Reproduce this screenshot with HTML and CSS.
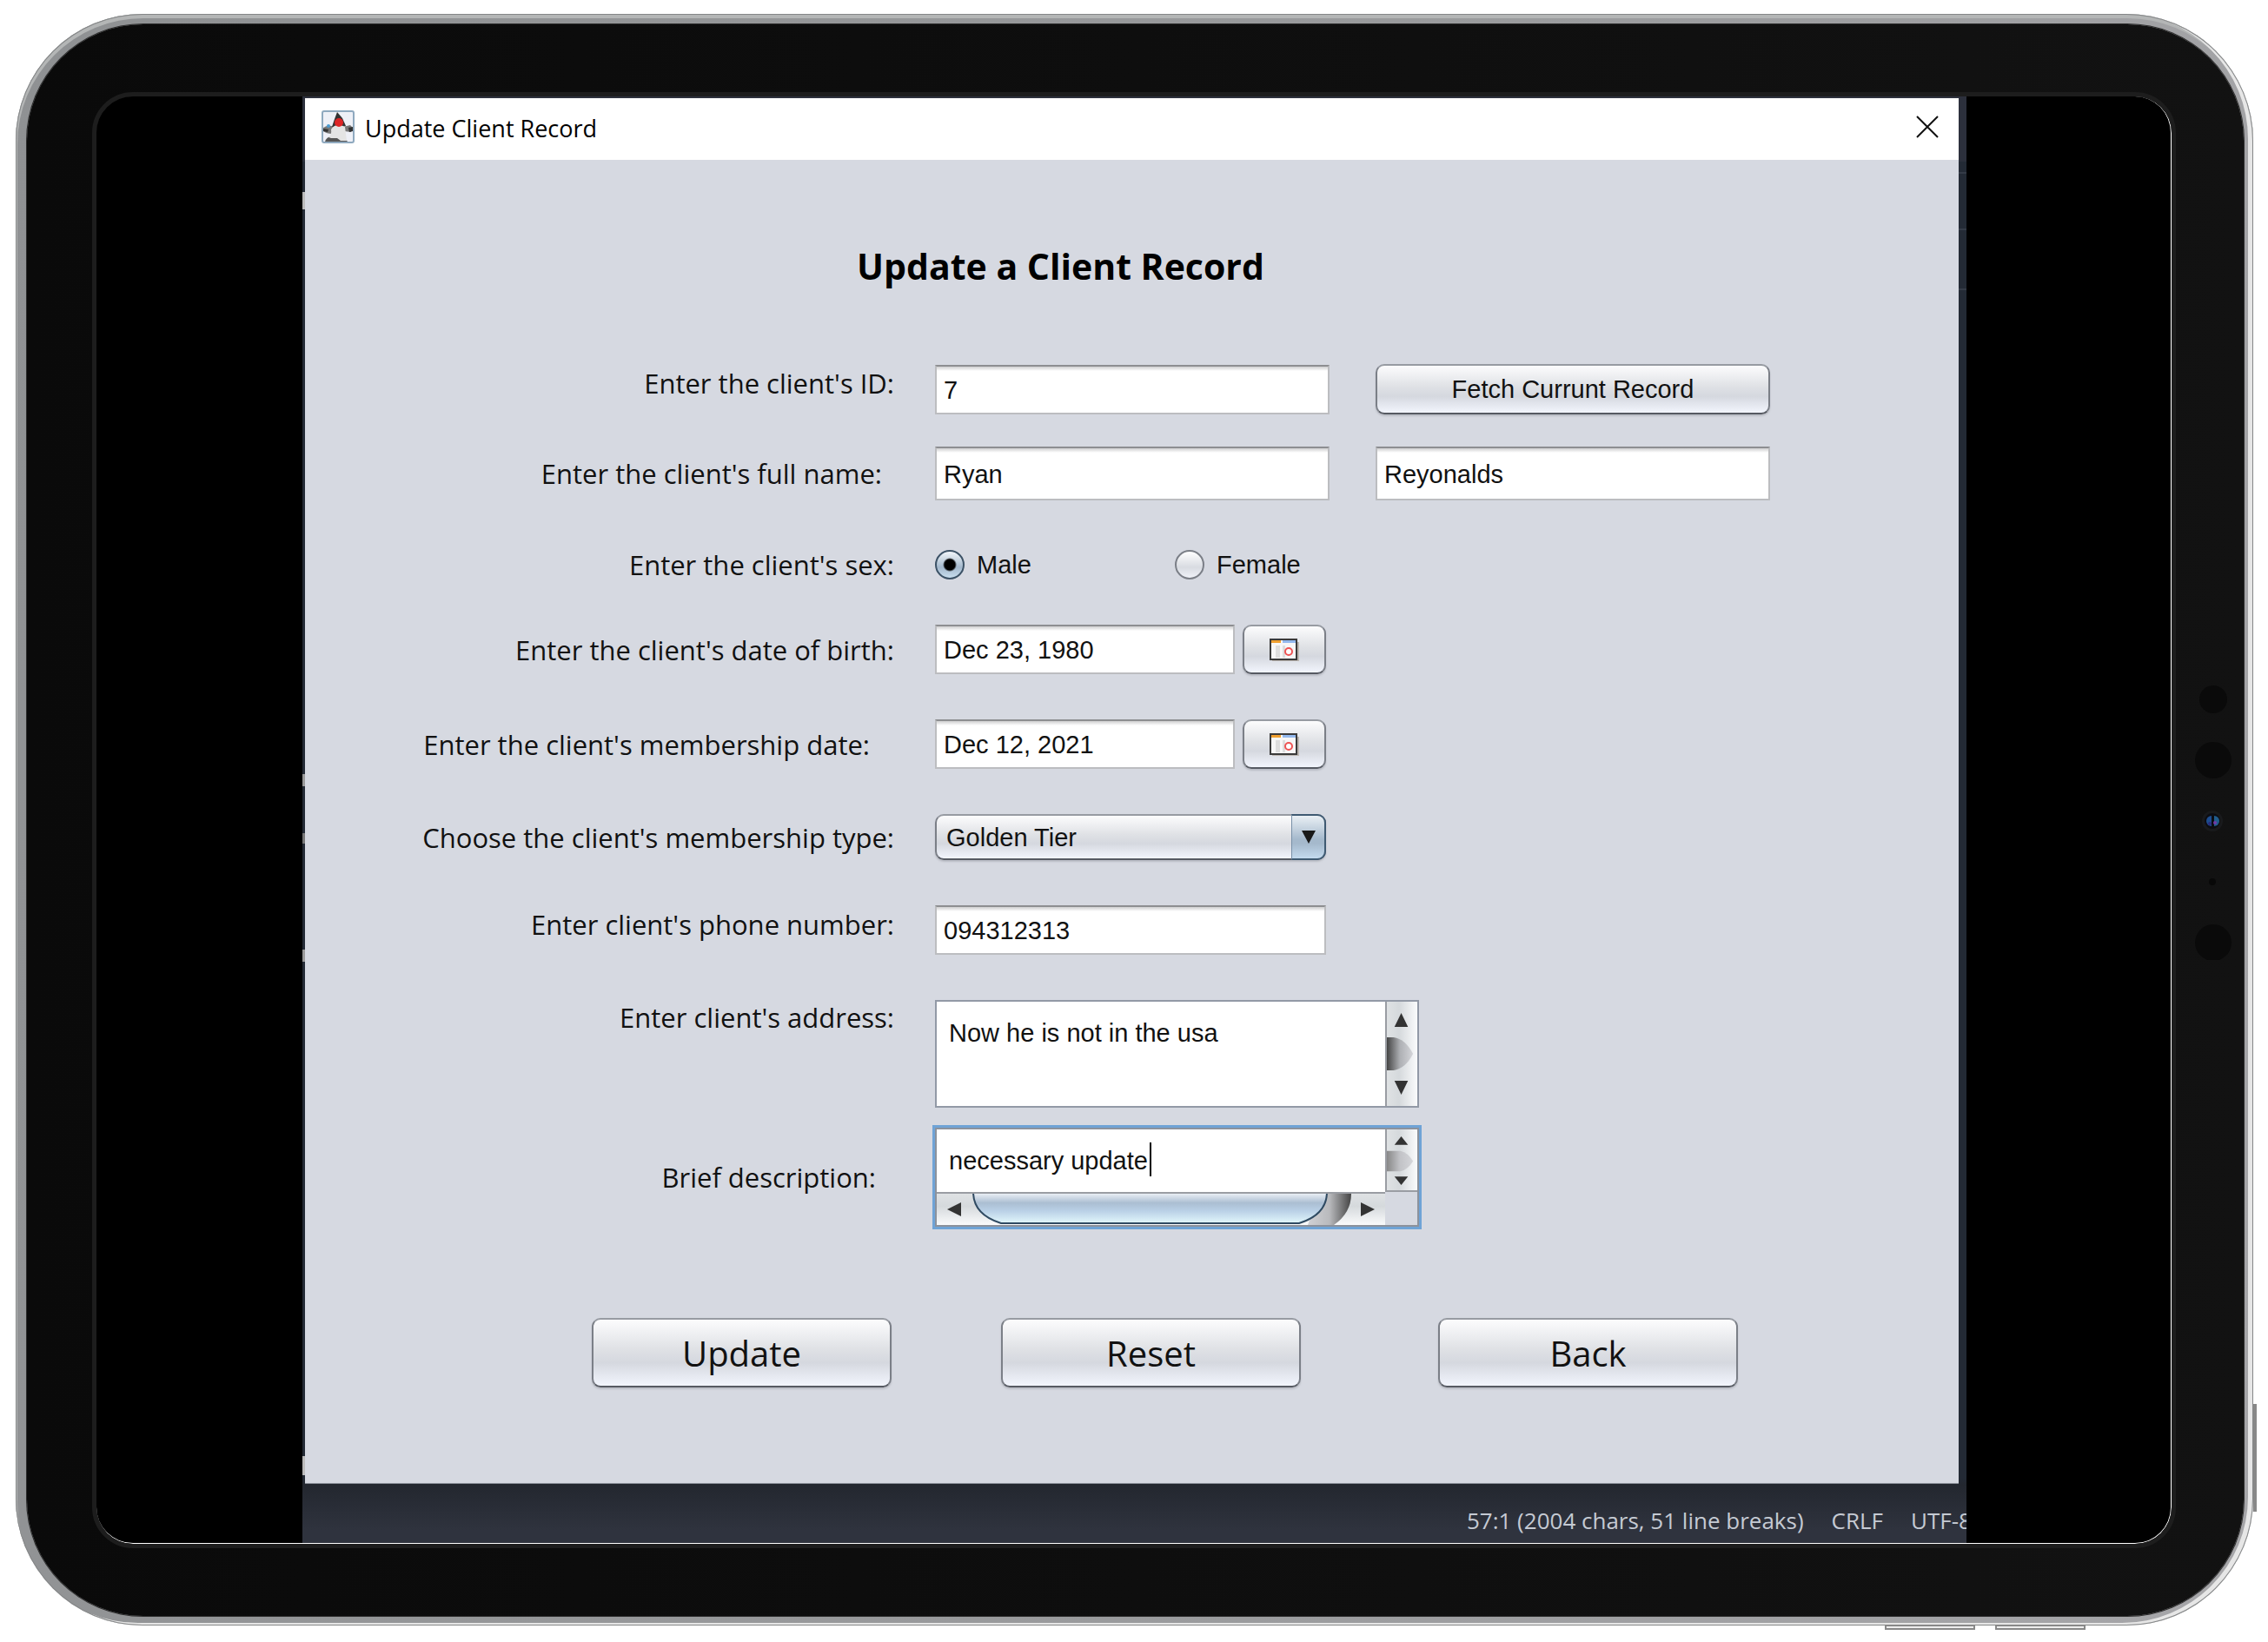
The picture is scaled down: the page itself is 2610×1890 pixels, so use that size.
FILE: index.html
```html
<!DOCTYPE html>
<html lang="en">
<head>
<meta charset="utf-8">
<title>Update Client Record</title>
<link rel="stylesheet" href="styles.css">
</head>
<body>
<div class="device">
  <span class="key key-side"></span>
  <span class="key key-low key-low-a"></span>
  <span class="key key-low key-low-b"></span>
  <div class="bezel">
    <svg class="sensors" width="44" height="320" viewBox="0 0 44 320" aria-hidden="true">
      <circle cx="22" cy="20" r="16" fill="#0a0a0a"/>
      <circle cx="22" cy="90" r="21" fill="#0a0a0a"/>
      <circle cx="21" cy="160" r="12" fill="#191a1c"/>
      <circle cx="21" cy="160" r="9" fill="#0c0d12"/>
      <path d="M20 154a6 6 0 0 0 0 12z" fill="#1d4c8e"/>
      <path d="M23 154a6 6 0 0 1 0 12z" fill="#205c8c"/>
      <circle cx="18" cy="163" r="2" fill="#282a7c"/>
      <circle cx="24" cy="162" r="2" fill="#713aa8"/>
      <circle cx="21" cy="230" r="4" fill="#080808"/>
      <circle cx="22" cy="300" r="21" fill="#0a0a0a"/>
    </svg>
    <div class="screen">
      <div class="desktop">
        <main class="window">
          <header class="titlebar">
            <svg class="duke" viewBox="0 0 38 38" aria-hidden="true">
              <rect x="1" y="1" width="36" height="36" rx="2" fill="#eef0f7" stroke="#8fa9bf" stroke-width="2"/>
              <path d="M2 20q6-4 12-1l-2 8q-6 0-10-3zM25 19l8-2 3 3-2 5-8-1z" fill="#777"/>
              <path d="M2 21l6 1-1 3-5-1z" fill="#333"/>
              <path d="M31 20l5-1v5l-4 1z" fill="#333"/>
              <path d="M4 36q1-5 9-7l13 2 4 5z" fill="#555"/>
              <path d="M18 2l6 7 4 9-8 2-8-1 3-9z" fill="#333"/>
              <path d="M11 22q3-5 8-5 5 0 8 2l2 16-7 0-4-3-7 0-3-1q4-3 3-9z" fill="#e4e4e4"/>
              <circle cx="20" cy="14" r="5" fill="#dd2526"/>
              <circle cx="8" cy="18" r="2" fill="#4a9ad0"/>
            </svg>
            <span class="titlebar-text">Update Client Record</span>
            <button class="close" type="button" aria-label="Close">
              <svg width="26" height="26" viewBox="0 0 26 26"><path d="M1 1l24 24M25 1L1 25" stroke="#111" stroke-width="2" fill="none"/></svg>
            </button>
          </header>
          <form class="form">
            <h1 class="heading">Update a Client Record</h1>

            <div class="row">
              <label class="label raised" for="id">Enter the client's ID:</label>
              <input class="text wide" id="id" type="text" value="7">
              <button class="button fetch" type="button">Fetch Currunt Record</button>
            </div>
            <div class="row row-near">
              <label class="label inset-1" for="first">Enter the client's full name:</label>
              <input class="text wide tall" id="first" type="text" value="Ryan">
              <input class="text wide tall" type="text" value="Reyonalds" aria-label="Last name">
            </div>
            <div class="row row-sex" role="radiogroup" aria-labelledby="sex">
              <span class="label" id="sex">Enter the client's sex:</span>
              <label class="choice"><input class="radio" type="radio" name="sex" checked>Male</label>
              <label class="choice"><input class="radio" type="radio" name="sex">Female</label>
            </div>
            <div class="row">
              <label class="label" for="dob">Enter the client's date of birth:</label>
              <div class="date">
                <input class="text" id="dob" type="text" value="Dec 23, 1980">
                <button class="button pick" type="button" aria-label="Pick date of birth">
                  <svg width="34" height="26" viewBox="0 0 34 26"><use href="#cal"/></svg>
                </button>
              </div>
            </div>
            <div class="row">
              <label class="label inset-3" for="joined">Enter the client's membership date:</label>
              <div class="date">
                <input class="text" id="joined" type="text" value="Dec 12, 2021">
                <button class="button pick" type="button" aria-label="Pick membership date">
                  <svg width="34" height="26" viewBox="0 0 34 26">
                    <g id="cal">
                      <path d="M3 25h30V4" fill="none" stroke="#bbb5b0" stroke-width="2"/>
                      <rect x="1" y="1" width="30" height="23" fill="#f7f7f7" stroke="#3a3a3a" stroke-width="2"/>
                      <path d="M2 2h11v3H2z" fill="#f0a030"/>
                      <path d="M15 2h15v3H15z" fill="#94b9ee"/>
                      <path d="M7 8h5v14H7zM15 8h3v14h-3z" fill="#dedede"/>
                      <circle cx="22" cy="15" r="4" fill="#fff" stroke="#ee5353" stroke-width="2"/>
                    </g>
                  </svg>
                </button>
              </div>
            </div>
            <div class="row">
              <label class="label" for="tier">Choose the client's membership type:</label>
              <div class="combo">
                <select class="select" id="tier"><option>Golden Tier</option><option>Silver Tier</option></select>
                <span class="combo-arrow"><svg width="16" height="15" viewBox="0 0 16 15"><path d="M0 0h16L8 15z" fill="#191919"/></svg></span>
              </div>
            </div>
            <div class="row">
              <label class="label raised" for="phone">Enter client's phone number:</label>
              <input class="text mid" id="phone" type="text" value="094312313">
            </div>
            <div class="row">
              <label class="label at-top" for="address">Enter client's address:</label>
              <div class="pane pane-address">
                <textarea class="area" id="address">Now he is not in the usa</textarea>
                <svg class="vbar" viewBox="0 0 36 120" preserveAspectRatio="none" aria-hidden="true">
                  <path d="M17 13l8 16H9zM17 107l8-16H9z" fill="#333"/>
                  <path d="M0 41h8q14 2 23 19-9 17-23 19H0z" fill="url(#knob)"/>
                </svg>
              </div>
            </div>
            <div class="row row-focus">
              <label class="label inset-2" for="brief">Brief description:</label>
              <div class="pane pane-brief">
                <div class="area-box">
                  <textarea class="area" id="brief">necessary update</textarea>
                  <span class="caret"></span>
                </div>
                <svg class="vbar vbar-short" viewBox="0 0 36 71" preserveAspectRatio="none" aria-hidden="true">
                  <path d="M17 8l8 10H9zM17 65l8-10H9z" fill="#333"/>
                  <path d="M0 25h16q9 2 15 12-6 10-15 12H0z" fill="url(#knob2)"/>
                </svg>
                <svg class="hbar" viewBox="0 0 516 36" preserveAspectRatio="none" aria-hidden="true">
                  <defs>
                    <linearGradient id="knob"><stop offset="0" stop-color="#444"/><stop offset=".5" stop-color="#aeb0b4"/><stop offset="1" stop-color="#d5d6da"/></linearGradient>
                    <linearGradient id="knob2"><stop offset="0" stop-color="#888"/><stop offset=".5" stop-color="#c2c3c7"/><stop offset="1" stop-color="#d5d6da"/></linearGradient>
                    <linearGradient id="thumb" x2="0" y2="1"><stop offset="0" stop-color="#f4f7fa"/><stop offset=".35" stop-color="#abbed2"/><stop offset=".6" stop-color="#b9d0e6"/><stop offset="1" stop-color="#e2f7fc"/></linearGradient>
                    <linearGradient id="tail"><stop offset="0" stop-color="#d0d1d5"/><stop offset=".5" stop-color="#b9babd"/><stop offset="1" stop-color="#444"/></linearGradient>
                  </defs>
                  <path d="M12 18l16-8v16zM504 18l-16-8v16z" fill="#333"/>
                  <path d="M440 0h37q0 22-20 36h-30z" fill="url(#tail)"/>
                  <path d="M42-2q0 26 32 36h343q32-10 32-36z" fill="url(#thumb)" stroke="#2f4a62" stroke-width="2"/>
                </svg>
              </div>
            </div>

            <div class="actions">
              <button class="button action action-1" type="button">Update</button>
              <button class="button action action-2" type="button">Reset</button>
              <button class="button action action-3" type="button">Back</button>
            </div>
          </form>
        </main>
        <footer class="status">
          <span>57:1 (2004 chars, 51 line breaks)</span>
          <span>CRLF</span>
          <span class="clip">UTF-8</span>
        </footer>
      </div>
    </div>
  </div>
</div>
</body>
</html>
```
FILE: styles.css
```css
* { box-sizing: border-box; }

body {
  margin: 0;
  padding: 16px 17px 16px 18px;
  background: #fff;
  color: #111;
  font-family: "Open Sans", "Noto Sans", sans-serif;
}

/* Tablet frame */
.device {
  position: relative;
  padding: 12px 11px 11px 13px;
  border-radius: 146px;
  background: linear-gradient(100deg, #8f9193, #9b9c9e 60%, #a6a6a9);
  box-shadow: inset 0 0 0 1px #858788, inset -5px -2px 0 1px #e6e6e6, inset 1px 4px 0 1px #b4b6b6;
}
.bezel {
  position: relative;
  padding: 78px;
  border-radius: 134px;
  background: linear-gradient(90deg, #0a0a0a, #121212);
  box-shadow: 0 0 0 1px #2b2b2b;
}
.screen {
  display: grid;
  grid-template-columns: 237fr 1915fr 235fr;
  overflow: hidden;
  border: solid #fff;
  border-width: 0 1px 1px 0;
  border-radius: 42px;
  outline: 5px solid #1d1d1d;
  background: #000;
  margin: 5px 5px 5px 2px;
}
.sensors {
  position: absolute;
  right: 13px;
  top: 757px;
}
.key {
  position: absolute;
  border: 2px solid #888;
  background: #eee;
}
.key-side { right: -4px; top: 1600px; width: 4px; height: 124px; }
.key-low { bottom: -5px; width: 104px; height: 6px; }
.key-low-a { right: 320px; }
.key-low-b { right: 193px; }

/* Desktop behind the dialog */
.desktop {
  grid-column: 2;
  overflow: hidden;
  background:
    linear-gradient(#bbb, #bbb) 0 110px / 3px 20px no-repeat,
    linear-gradient(#999, #999) 0 780px / 3px 14px no-repeat,
    linear-gradient(#777, #777) 0 848px / 3px 12px no-repeat,
    linear-gradient(#999, #999) 0 982px / 3px 14px no-repeat,
    linear-gradient(#bbb, #bbb) 0 1565px / 3px 22px no-repeat,
    linear-gradient(#343b47, #343b47) 100% 87px / 9px 2px no-repeat,
    linear-gradient(#343b47, #343b47) 100% 152px / 9px 2px no-repeat,
    linear-gradient(#343b47, #343b47) 100% 221px / 9px 2px no-repeat,
    linear-gradient(#2c303c 0 75px, #232a35 75px 1590px, #23272f 1598px, #2f333e 1650px);
}
.window {
  margin: 2px 9px 0 3px;
  background: #d6d9e1;
  border-bottom: 1px solid #8a8f99;
}
.titlebar {
  display: flex;
  align-items: center;
  height: 71px;
  padding: 0 23px 2px 19px;
  background: #fff;
}
.duke { width: 38px; height: 38px; margin-bottom: 4px; }
.titlebar-text {
  margin: 0 auto 0 12px;
  font-size: 27px;
  color: #000;
}
.close {
  padding: 0;
  margin-bottom: 4px;
  border: 0;
  background: none;
  line-height: 0;
}

/* Form */
.form { padding: 92px 0 110px; }
.heading {
  margin: 0;
  padding-right: 164px;
  text-align: center;
  font-size: 41px;
  line-height: 60px;
  font-weight: 700;
  color: #000;
}
.row {
  display: grid;
  grid-template-columns: 672fr 454px 454px 164fr;
  column-gap: 53px;
  align-items: center;
  margin-top: 52px;
}
.heading + .row { margin-top: 83px; }
.row-near { margin-top: 37px; }
.row-sex {
  grid-template-columns: 672fr 223px 685px 164fr;
  grid-template-rows: 34px;
  margin-top: 57px;
}
.row-focus { margin-top: 20px; }

.label {
  justify-self: end;
  margin-right: -6px;
  font-size: 31px;
  line-height: 40px;
  white-space: nowrap;
}
.raised { padding-bottom: 14px; }
.at-top { align-self: start; }
.inset-1 { padding-right: 14px; }
.inset-2 { padding-right: 21px; }
.inset-3 { padding-right: 28px; }

.text, .select, .area, .fetch, .choice {
  font: 29px/36px "Liberation Sans", Arial, sans-serif;
  color: #111;
}
.text {
  width: 100%;
  height: 57px;
  padding: 2px 8px 0;
  border: 2px solid #bcbdc0;
  border-top-color: #8d8e91;
  border-radius: 0;
  background: linear-gradient(#cfcfd0, #fff 5px);
  outline: 0;
}
.tall { height: 62px; }
.mid { width: 450px; }

.button {
  padding: 0;
  border: 2px solid #7b7f87;
  border-color: #979ba2 #7b7f87 #565a62;
  border-radius: 10px;
  background: linear-gradient(#fcfcfd, #dfe1e5 45%, #d5d8df 65%, #f2f5fd);
  box-shadow: 0 2px 2px #b9bcc4;
  color: #111;
}
.fetch { height: 58px; }

.choice {
  display: flex;
  align-items: center;
  gap: 14px;
}
.radio {
  appearance: none;
  width: 34px;
  height: 34px;
  margin: 0;
  border: 2px solid #7b7f87;
  border-radius: 50%;
  background: linear-gradient(#fff, #d8dbe1 60%, #f0f2f8);
}
.radio:checked {
  border-color: #3c5266;
  background:
    radial-gradient(circle, #000 0 6px, #0000 8px),
    linear-gradient(#f2f6fa, #a3b8cc 60%, #c8deee);
}

.date {
  display: grid;
  grid-template-columns: 345px 96px;
  gap: 9px;
}
.pick { line-height: 0; }

.combo {
  position: relative;
  width: 450px;
}
.select {
  appearance: none;
  display: block;
  width: 100%;
  height: 53px;
  padding: 0 11px;
  border: 2px solid #7b7f87;
  border-color: #979ba2 #7b7f87 #565a62;
  border-radius: 10px;
  background: linear-gradient(#fcfcfd, #dfe1e5 45%, #d5d8df 65%, #f2f5fd);
  box-shadow: 0 2px 2px #b9bcc4;
}
.combo-arrow {
  position: absolute;
  inset: 0 0 0 auto;
  width: 40px;
  display: grid;
  place-items: center;
  border: 2px solid #3f5a72;
  border-left: 1px solid #7890a8;
  border-radius: 0 10px 10px 0;
  background: linear-gradient(#eaf0f5, #a5b9cc 55%, #a5b9cc 65%, #c3daee);
  pointer-events: none;
}

.pane {
  display: grid;
  grid-template-columns: 1fr 37px;
  grid-template-rows: minmax(0, 1fr);
  width: 557px;
  border: 2px solid #9299a6;
  background: #d6d9e1;
}
.pane-address { height: 124px; }
.pane-brief {
  width: 563px;
  margin-left: -3px;
  height: 120px;
  grid-template-rows: minmax(0, 1fr) 38px;
  border: 3px solid #6fa3d6;
  box-shadow: inset 0 0 0 2px #8c929c;
  padding: 2px;
}
.area {
  display: block;
  width: 100%;
  height: 100%;
  padding: 18px 14px;
  border: 0;
  resize: none;
  overflow: hidden;
  background: #fff;
  outline: 0;
}
.area-box { position: relative; }
.caret {
  position: absolute;
  left: 245px;
  top: 15px;
  width: 2px;
  height: 39px;
  background: #000;
}
.vbar {
  width: 100%;
  height: 100%;
  border-left: 2px solid #9a9da3;
  background: linear-gradient(90deg, #dfe2e4, #d5d9dc 40%, #fafbfc);
}
.vbar-short { border-bottom: 2px solid #9a9da3; }
.hbar {
  width: 100%;
  height: 100%;
  border-top: 2px solid #9a9da3;
  background: linear-gradient(#dfe2e4, #d5d9dc 40%, #fafbfc);
}

.actions {
  display: grid;
  grid-template-columns: 330fr 345px 126fr 345px 158fr 345px 254fr;
  margin-top: 102px;
}
.action {
  height: 80px;
  padding-top: 2px;
  font: 40px/50px "Open Sans", "Noto Sans", sans-serif;
}
.action-1 { grid-column: 2; }
.action-2 { grid-column: 4; }
.action-3 { grid-column: 6; }

.status {
  display: flex;
  justify-content: flex-end;
  gap: 32px;
  height: 68px;
  padding-top: 22px;
  font-size: 26px;
  line-height: 40px;
  white-space: nowrap;
  color: #c5cad3;
}
.clip { width: 64px; }
```
